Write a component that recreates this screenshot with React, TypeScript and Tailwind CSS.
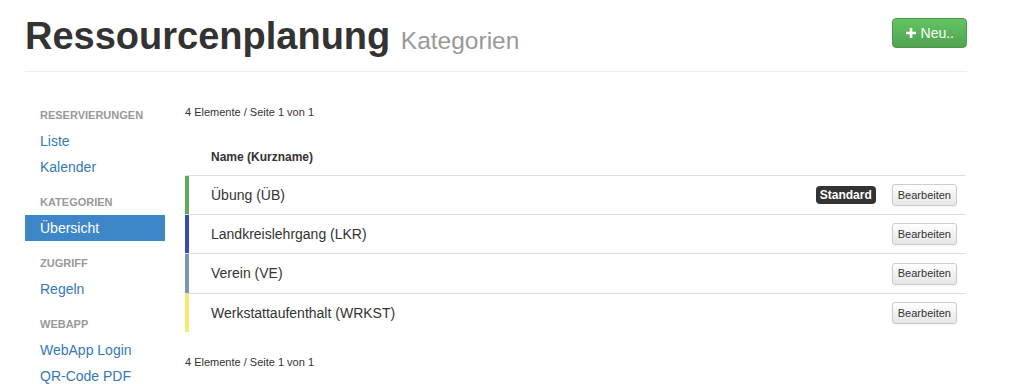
import React from 'react';

type Category = {
  name: string;
  color: string;
  isDefault?: boolean;
};

const categories: Category[] = [
  { name: 'Übung (ÜB)', color: '#5cac5c', isDefault: true },
  { name: 'Landkreislehrgang (LKR)', color: '#3f4ab0' },
  { name: 'Verein (VE)', color: '#7d94b8' },
  { name: 'Werkstattaufenthalt (WRKST)', color: '#f3ec6c' },
];

const sections = [
  { title: 'Reservierungen', links: ['Liste', 'Kalender'] },
  { title: 'Kategorien', links: ['Übersicht'] },
  { title: 'Zugriff', links: ['Regeln'] },
  { title: 'WebApp', links: ['WebApp Login', 'QR-Code PDF'] },
];

const Sidebar = () => (
  <nav className="w-[140px] shrink-0 pt-[33px]">
    {sections.map((section, i) => (
      <div key={section.title} className={i === 0 ? '' : 'mt-[12px]'}>
        <div className="h-[20px] mb-[3px] px-[15px] text-[11px] leading-[20px] font-bold uppercase text-[#999]">
          {section.title}
        </div>
        {section.links.map(link => (
          <a
            key={link}
            href="#"
            className={`block h-[26px] px-[15px] text-[14px] leading-[26px] ${link === 'Übersicht' ? 'bg-[#3d87c9] text-white' : 'text-[#337ab7]'}`}
          >
            {link}
          </a>
        ))}
      </div>
    ))}
  </nav>
);

const Pagination = () => (
  <div className="text-[11px] leading-[18px] text-[#333]">4 Elemente / Seite 1 von 1</div>
);

const CategoryRow = ({ category, last }: { category: Category; last?: boolean }) => (
  <div className={`flex items-center border-t border-[#ddd] ${last ? 'h-[40px]' : 'h-[39px]'}`}>
    <div className="w-[4px] h-full shrink-0" style={{ backgroundColor: category.color }} />
    <div className="flex-1 pl-[22px] text-[14px] text-[#333]">{category.name}</div>
    {category.isDefault && (
      <span className="mr-[16px] px-[4px] h-[18px] leading-[18px] rounded-[4px] bg-[#333] text-white text-[12px] font-bold">
        Standard
      </span>
    )}
    <button className="mr-[8px] h-[22px] px-[5px] text-[11px] text-[#333] border border-[#ccc] rounded-[3px] bg-gradient-to-b from-white to-[#e6e6e6] shadow-[0_1px_2px_rgba(0,0,0,0.05)]">
      Bearbeiten
    </button>
  </div>
);

export default function App() {
  return (
    <div className="min-h-[384px] bg-white font-['Liberation_Sans',Arial,sans-serif]">
      <div className="w-[942px] ml-[25px]">
        <header className="flex justify-between items-start pt-[14px] pb-[8px] border-b border-[#eee]">
          <h1 className="text-[38px] leading-[44px] font-bold text-[#333]">
            Ressourcenplanung <small className="text-[24.5px] font-normal text-[#999]">Kategorien</small>
          </h1>
          <button className="mt-[4px] h-[30px] px-[12px] flex items-center gap-[4px] rounded-[4px] border border-[#4c9a4c] bg-gradient-to-b from-[#62c462] to-[#51a351] text-white text-[14px]">
            <svg width="12" height="12" viewBox="0 0 12 12" aria-hidden="true">
              <path d="M6 1v10M1 6h10" stroke="white" strokeWidth="2.6" />
            </svg>
            Neu..
          </button>
        </header>

        <div className="flex gap-[20px]">
          <Sidebar />
          <main className="flex-1 pt-[31px] pr-[2px]">
            <Pagination />
            <div className="mt-[18px]">
              <div className="h-[36px] pl-[26px] flex items-center text-[12px] font-bold text-[#333]">
                Name (Kurzname)
              </div>
              {categories.map((c, i) => (
                <CategoryRow key={c.name} category={c} last={i === 2} />
              ))}
            </div>
            <div className="mt-[21px]">
              <Pagination />
            </div>
          </main>
        </div>
      </div>
    </div>
  );
}
